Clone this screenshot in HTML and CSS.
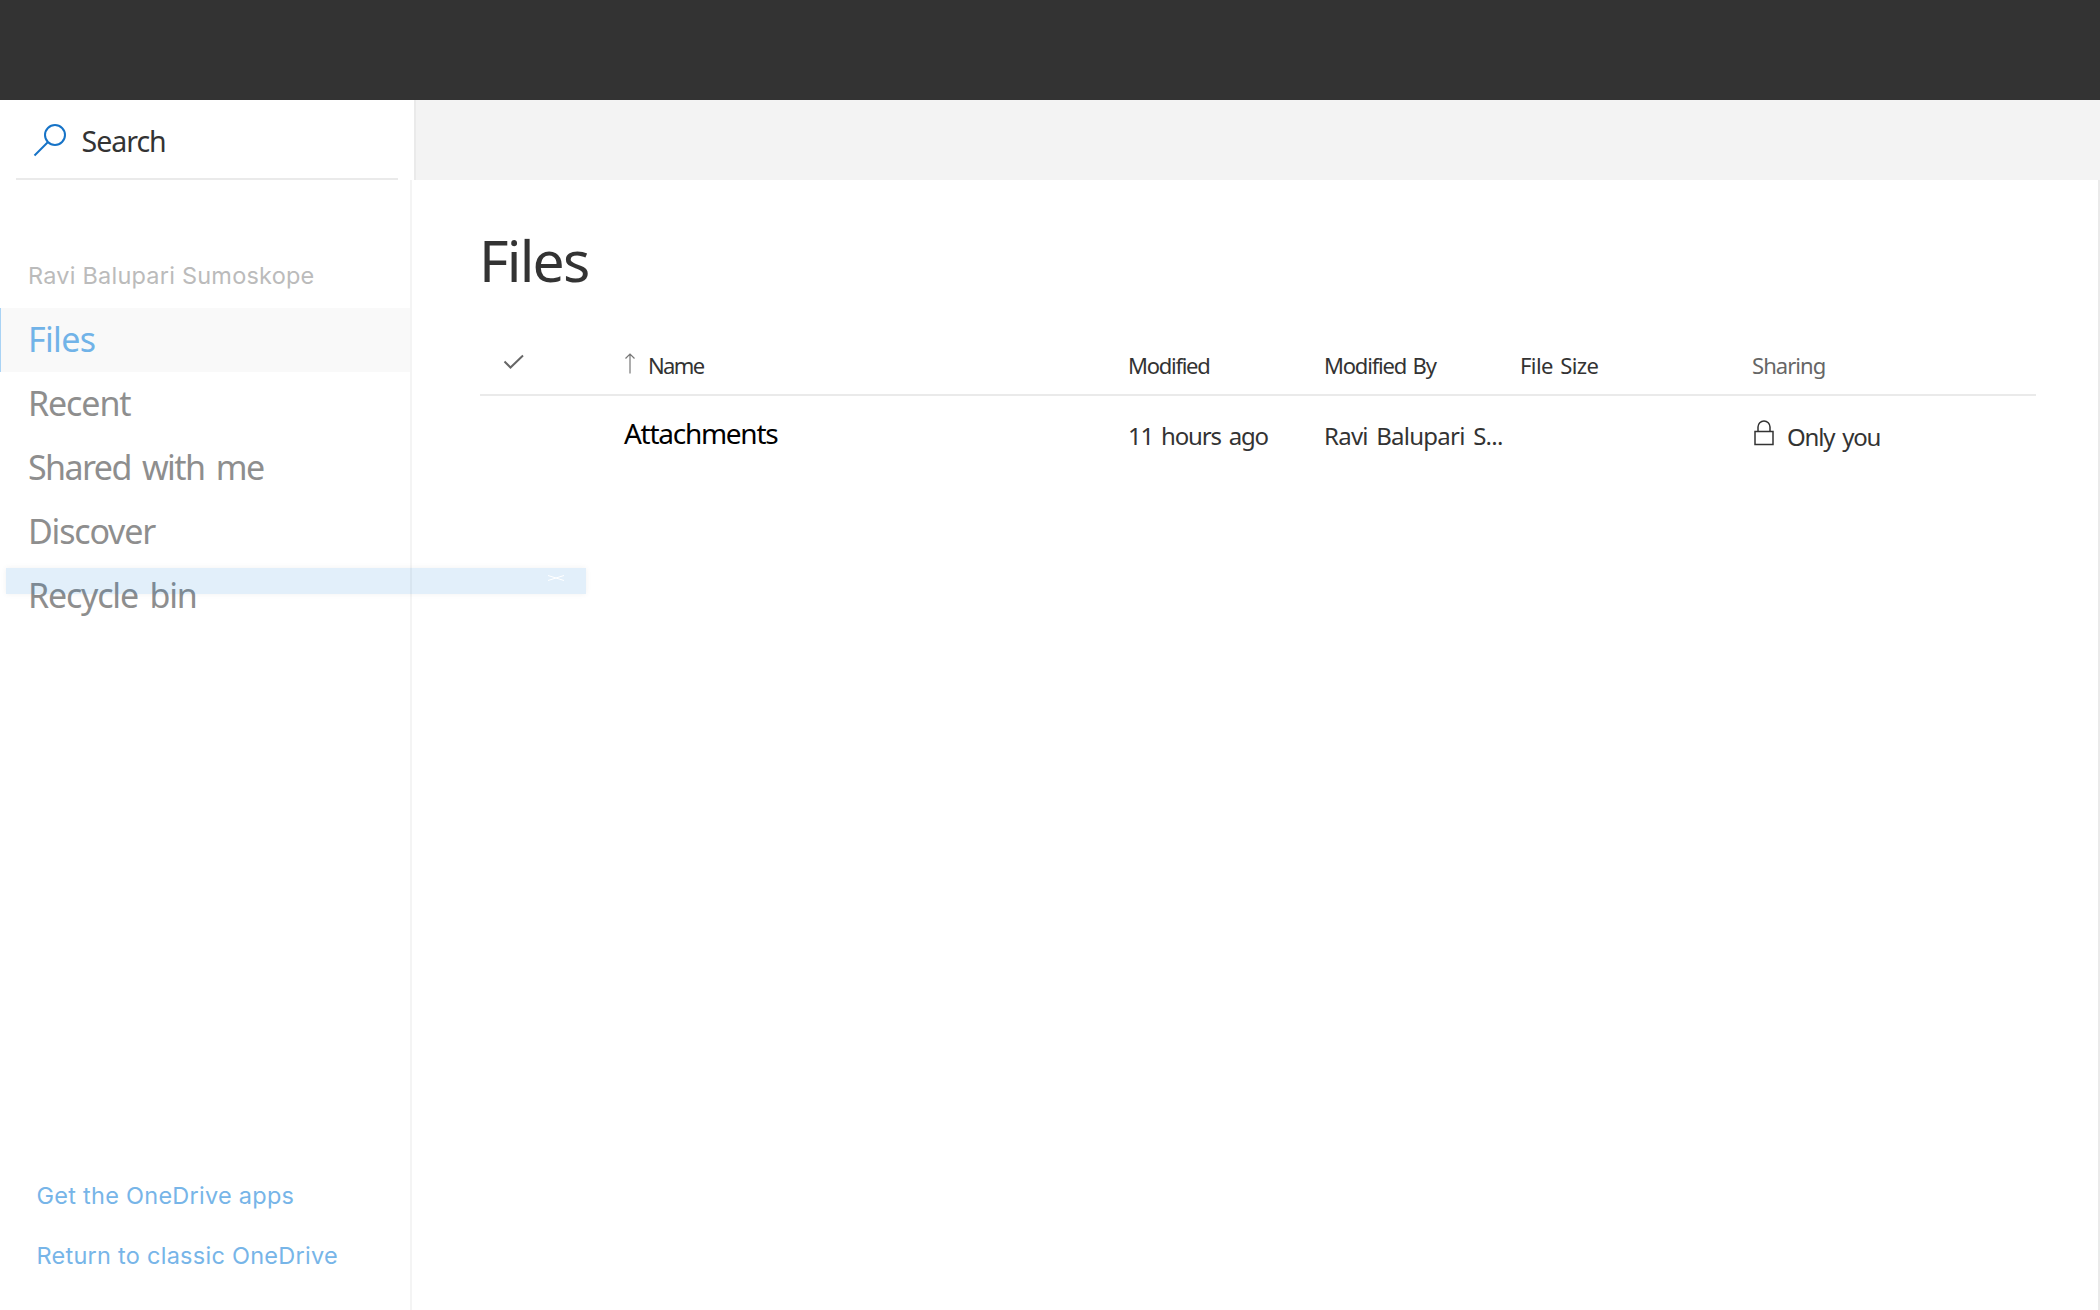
FILE: index.html
```html
<!DOCTYPE html>
<html lang="en">
<head>
<meta charset="utf-8">
<title>Files - OneDrive</title>
<link rel="stylesheet" href="styles.css">
</head>
<body>
<header class="suite-bar"></header>
<div class="command-bar">
  <div class="search">
    <svg class="search-icon" viewBox="0 0 34 34"><circle cx="22" cy="12" r="10"/><path d="M15 19L1.5 32.5"/></svg>
    <span class="search-label">Search</span>
  </div>
</div>
<div class="body">
  <aside class="sidebar">
    <div class="owner"><span>Ravi Balupari Sumoskope</span></div>
    <nav class="nav">
      <a class="nav-item selected"><span>Files</span></a>
      <a class="nav-item recent"><span>Recent</span></a>
      <a class="nav-item shared"><span>Shared with me</span></a>
      <a class="nav-item"><span>Discover</span></a>
      <a class="nav-item"><span>Recycle bin</span></a>
    </nav>
    <div class="links">
      <a><span>Get the OneDrive apps</span></a>
      <a><span>Return to classic OneDrive</span></a>
    </div>
  </aside>
  <main class="content">
    <h1>Files</h1>
    <div class="row head">
      <div class="check"><svg viewBox="0 0 22 16"><path d="M1.500 7.500L7.500 13.500L20 1.500"/></svg></div>
      <div class="name"><svg class="sort" viewBox="0 0 10 21"><path d="M5 20.500V1M.5 5.500L5 1L9.500 5.500"/></svg><span>Name</span></div>
      <div class="modified"><span>Modified</span></div>
      <div class="editor"><span>Modified By</span></div>
      <div class="size"><span>File Size</span></div>
      <div class="sharing"><span>Sharing</span></div>
    </div>
    <div class="row item">
      <div></div>
      <div class="file"><span>Attachments</span></div>
      <div class="ago"><span>11 hours ago</span></div>
      <div class="by"><span>Ravi Balupari S...</span></div>
      <div></div>
      <div class="access"><svg class="lock" viewBox="0 0 20 26"><path d="M1 11.500H19V24.500H1ZM4 11.500V7a6 6 0 0 1 12 0V11.500"/></svg><span>Only you</span></div>
    </div>
  </main>
</div>
<div class="notice"><svg viewBox="0 0 16 6"><path d="M0 .5L16 5.500M16 .5L0 5.500"/></svg></div>
</body>
</html>
```
FILE: styles.css
```css
* { box-sizing: border-box; }
body {
  margin: 0;
  height: 1310px;
  overflow: hidden;
  display: flex;
  flex-direction: column;
  background: #fff;
  color: #333;
  font-family: "Noto Sans", sans-serif;
}
span { white-space: nowrap; }
svg { fill: none; display: block; flex: none; }
.suite-bar { height: 100px; background: #333; flex: none; }
.command-bar { height: 80px; background: #f3f3f3; flex: none; display: flex; }
.search {
  width: 416px;
  border-right: 2px solid #eaeaea;
  background: #fff;
  display: flex;
  align-items: center;
  padding: 0 16px 0 33px;
  position: relative;
}
.search::after {
  content: "";
  position: absolute;
  left: 16px;
  right: 16px;
  bottom: 0;
  height: 2px;
  background: #eaeaea;
}
.search-icon { width: 34px; height: 34px; stroke: #1673c7; stroke-width: 2; margin-bottom: 1px; }
.search-label { font-size: 28.500px; letter-spacing: -1px; margin-left: 14.500px; padding-top: 2px; }
.body { flex: 1; display: flex; }
.sidebar {
  width: 412px;
  border-right: 2px solid #f4f4f4;
  display: flex;
  flex-direction: column;
}
.owner {
  height: 128px;
  padding: 78px 0 0 28px;
  font: 23.500px/36px Inter, sans-serif;
  letter-spacing: .22px;
  color: #bbb;
}
.nav-item {
  height: 64px;
  display: flex;
  align-items: center;
  padding: 0 0 2px 28px;
  font-size: 34px;
  letter-spacing: -1.200px;
  word-spacing: 4px;
  color: #8e8e8e;
}
.recent { letter-spacing: -1.100px; }
.shared { letter-spacing: -1.580px; }
.selected { background: #f9f9f9; color: #71b3e8; box-shadow: inset 1px 0 #a9d3f5; letter-spacing: -.65px; }
.links {
  margin-top: auto;
  padding: 0 0 24px 36.500px;
  font: 23.500px/60px Inter, sans-serif;
  letter-spacing: .26px;
  color: #77b5e8;
}
.links a { display: block; }
.content { flex: 1; padding: 0 62px 0 68px; border-right: 2px solid #eaeaea; }
h1 { margin: 0 0 0 -1px; padding-top: 41px; font-size: 57px; line-height: 78px; font-weight: 400; letter-spacing: -1.800px; }
.row {
  display: grid;
  grid-template-columns: 144px 504px 196px 196px 232px 1fr;
}
.row > div { display: flex; align-items: center; }
.head {
  margin-top: 35px;
  height: 62px;
  border-bottom: 2px solid #eaeaea;
  font-size: 22px;
  letter-spacing: -1.270px;
}
.head span { padding-top: 2px; }
.name { letter-spacing: -1.600px; }
.editor { letter-spacing: -1.200px; word-spacing: 2px; }
.size { letter-spacing: -.55px; word-spacing: 2px; }
.check svg { width: 22px; height: 16px; stroke: #666; stroke-width: 2; margin: 0 0 4px 23px; }
.sort { width: 10px; height: 21px; stroke: #777; stroke-width: 1.200; margin: 0 13px 1px 1px; }
.sharing { color: #666; letter-spacing: -.95px; }
.item { height: 80px; font-size: 24px; letter-spacing: -1.200px; word-spacing: 3px; }
.file { font-size: 28px; color: #000; letter-spacing: -1.270px; padding-bottom: 6px; }
.ago, .by { padding-bottom: 2px; }
.by { letter-spacing: -.75px; }
.lock { width: 20px; height: 26px; stroke: #333; stroke-width: 1.500; margin: 0 13px 6px 2px; }
.notice {
  position: absolute;
  left: 6px;
  top: 568px;
  width: 580px;
  height: 26px;
  background: rgba(0, 114, 210, .115);
  box-shadow: 0 0 6px rgba(0, 0, 0, .06);
}
.notice svg { position: absolute; right: 22px; top: 7px; width: 16px; height: 6px; stroke: #fff; stroke-width: 1; }
```
